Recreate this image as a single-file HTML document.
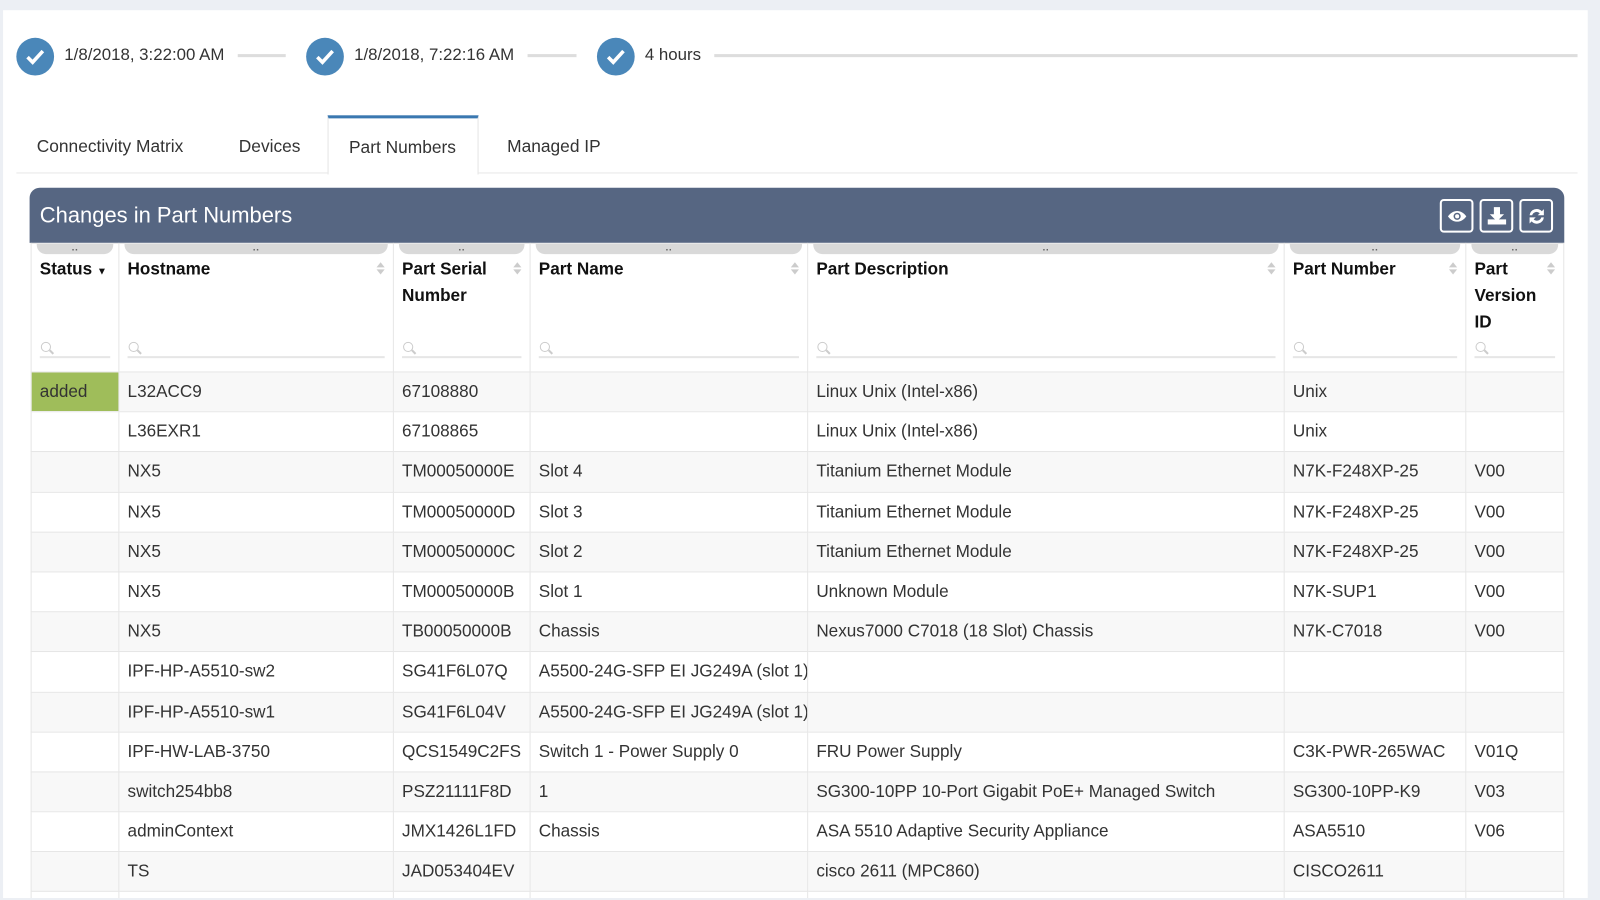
<!DOCTYPE html>
<html><head><meta charset="utf-8"><style>
*{box-sizing:border-box;margin:0;padding:0}
html,body{width:1600px;height:900px;overflow:hidden}
body{background:#eceff4;font-family:"Liberation Sans",sans-serif;color:#222;position:relative}
#w{position:absolute;left:0;top:0;width:1568px;height:880px;overflow:hidden;transform:scale(1.0204);transform-origin:0 0}
.card{position:absolute;left:3px;top:10px;width:1553px;height:900px;background:#fff}
.circ{position:absolute;top:37px;width:37px;height:37px;border-radius:50%;background:#4a87b9}
.circ svg{position:absolute;left:9px;top:10px}
.tl{position:absolute;top:45px;font-size:16.5px;color:#333}
.ln{position:absolute;top:53px;height:3px;background:#ddd}
.tabs{position:absolute;left:16px;top:113px;width:1530px;height:57px;border-bottom:1px solid #e8e8e8}
.tab{position:absolute;top:0;height:57px;font-size:17px;color:#333;padding-top:21px}
.tab.act{border-top:3px solid #3a78b0;border-left:1px solid #e5e5e5;border-right:1px solid #e5e5e5;background:#fff;height:58px;padding-top:19px}
.bar{position:absolute;left:29px;top:184px;width:1504px;height:54px;background:#566682;border-radius:10px 10px 0 0}
.bar h1{position:absolute;left:10px;top:15px;font-size:21.5px;font-weight:normal;color:#fff}
.btn{position:absolute;top:11px;width:33px;height:33px;border:2px solid #fff;border-radius:4px}
.btn svg{position:absolute;left:5px;top:5px}
table{position:absolute;left:30px;top:238px;width:1502px;border-collapse:collapse;table-layout:fixed;font-size:16.8px}
td,th{border:1px solid #e6e6e6;padding:0 8px;text-align:left;vertical-align:middle;white-space:nowrap;overflow:hidden}
th{height:126px;vertical-align:top;padding-top:12px;font-weight:bold;line-height:26px;white-space:normal;position:relative;font-size:16.8px;color:#111}
th .pill{position:absolute;left:5px;right:5px;top:0;height:10px;background:#d9d9d9;border-radius:0 0 9px 9px}
th .pill:after{content:"··";position:absolute;left:50%;top:-6px;font-size:10px;color:#666;transform:translateX(-50%)}
th .srt{position:absolute;right:8px;top:18px;width:8px}
th .srt:before{content:"";position:absolute;left:0;top:0;border:4px solid transparent;border-bottom:5px solid #ccc;border-top:0}
th .srt:after{content:"";position:absolute;left:0;top:7px;border:4px solid transparent;border-top:5px solid #ccc;border-bottom:0}
th .f{position:absolute;left:8px;right:8px;bottom:13px;height:16px;border-bottom:2px solid #e6e6e6}
th .f:before{content:"";position:absolute;left:1px;top:0;width:8px;height:8px;border:1.5px solid #ccc;border-radius:50%}
th .f:after{content:"";position:absolute;left:9px;top:9px;width:5px;height:2px;background:#ccc;transform:rotate(45deg)}
td{height:39.2px;color:#333}
tr:nth-child(even) td{background:#f8f8f8}
td.add{background:#9fbd5a!important;color:#333}
</style></head><body><div id="w">
<div class="card"></div>
<div class="circ" style="left:16px"><svg width="19" height="17" viewBox="0 0 19 17"><path d="M2 9l5 5 10-11" stroke="#fff" stroke-width="3.5" fill="none"/></svg></div>
<div class="tl" style="left:63px">1/8/2018, 3:22:00 AM</div>
<div class="ln" style="left:233px;width:47px"></div>
<div class="circ" style="left:300px"><svg width="19" height="17" viewBox="0 0 19 17"><path d="M2 9l5 5 10-11" stroke="#fff" stroke-width="3.5" fill="none"/></svg></div>
<div class="tl" style="left:347px">1/8/2018, 7:22:16 AM</div>
<div class="ln" style="left:517px;width:48px"></div>
<div class="circ" style="left:585px"><svg width="19" height="17" viewBox="0 0 19 17"><path d="M2 9l5 5 10-11" stroke="#fff" stroke-width="3.5" fill="none"/></svg></div>
<div class="tl" style="left:632px">4 hours</div>
<div class="ln" style="left:700px;width:846px"></div>
<div class="tabs">
<div class="tab" style="left:20px">Connectivity Matrix</div>
<div class="tab" style="left:218px">Devices</div>
<div class="tab act" style="left:305px;width:148px;padding-left:20px">Part Numbers</div>
<div class="tab" style="left:481px">Managed IP</div>
</div>
<div class="bar"><h1>Changes in Part Numbers</h1>
<div class="btn" style="left:1382px"><svg width="20" height="20" viewBox="0 0 20 20"><path d="M1 10c5-7 13-7 18 0c-5 7-13 7-18 0z" fill="#fff"/><circle cx="10" cy="10" r="3.5" fill="#566682"/><circle cx="10" cy="10" r="2" fill="#fff"/></svg></div>
<div class="btn" style="left:1421px"><svg width="20" height="20" viewBox="0 0 20 20"><path d="M7 1h6v7h4l-7 7-7-7h4z" fill="#fff"/><rect x="1" y="13" width="18" height="5" fill="#fff"/></svg></div>
<div class="btn" style="left:1460px"><svg width="20" height="20" viewBox="0 0 20 20"><path d="M3 9a7 7 0 0 1 12-4l2-2v6h-6l2-2a4.5 4.5 0 0 0-7.5 2zM17 11a7 7 0 0 1-12 4l-2 2v-6h6l-2 2a4.5 4.5 0 0 0 7.5-2z" fill="#fff"/></svg></div>
</div>
<table>
<colgroup><col style="width:86px"><col style="width:269px"><col style="width:134px"><col style="width:272px"><col style="width:467px"><col style="width:178px"><col style="width:96px"></colgroup>
<tr>
<th><div class="pill"></div>Status <span style="font-size:10px">&#9660;</span><div class="f"></div></th>
<th><div class="pill"></div>Hostname<span class="srt"></span><div class="f"></div></th>
<th><div class="pill"></div>Part Serial Number<span class="srt"></span><div class="f"></div></th>
<th><div class="pill"></div>Part Name<span class="srt"></span><div class="f"></div></th>
<th><div class="pill"></div>Part Description<span class="srt"></span><div class="f"></div></th>
<th><div class="pill"></div>Part Number<span class="srt"></span><div class="f"></div></th>
<th><div class="pill"></div>Part Version ID<span class="srt"></span><div class="f"></div></th>
</tr>
<tr><td class="add">added</td><td>L32ACC9</td><td>67108880</td><td></td><td>Linux Unix (Intel-x86)</td><td>Unix</td><td></td></tr>
<tr><td></td><td>L36EXR1</td><td>67108865</td><td></td><td>Linux Unix (Intel-x86)</td><td>Unix</td><td></td></tr>
<tr><td></td><td>NX5</td><td>TM00050000E</td><td>Slot 4</td><td>Titanium Ethernet Module</td><td>N7K-F248XP-25</td><td>V00</td></tr>
<tr><td></td><td>NX5</td><td>TM00050000D</td><td>Slot 3</td><td>Titanium Ethernet Module</td><td>N7K-F248XP-25</td><td>V00</td></tr>
<tr><td></td><td>NX5</td><td>TM00050000C</td><td>Slot 2</td><td>Titanium Ethernet Module</td><td>N7K-F248XP-25</td><td>V00</td></tr>
<tr><td></td><td>NX5</td><td>TM00050000B</td><td>Slot 1</td><td>Unknown Module</td><td>N7K-SUP1</td><td>V00</td></tr>
<tr><td></td><td>NX5</td><td>TB00050000B</td><td>Chassis</td><td>Nexus7000 C7018 (18 Slot) Chassis</td><td>N7K-C7018</td><td>V00</td></tr>
<tr><td></td><td>IPF-HP-A5510-sw2</td><td>SG41F6L07Q</td><td>A5500-24G-SFP EI JG249A (slot 1)</td><td></td><td></td><td></td></tr>
<tr><td></td><td>IPF-HP-A5510-sw1</td><td>SG41F6L04V</td><td>A5500-24G-SFP EI JG249A (slot 1)</td><td></td><td></td><td></td></tr>
<tr><td></td><td>IPF-HW-LAB-3750</td><td>QCS1549C2FS</td><td>Switch 1 - Power Supply 0</td><td>FRU Power Supply</td><td>C3K-PWR-265WAC</td><td>V01Q</td></tr>
<tr><td></td><td>switch254bb8</td><td>PSZ21111F8D</td><td>1</td><td>SG300-10PP 10-Port Gigabit PoE+ Managed Switch</td><td>SG300-10PP-K9</td><td>V03</td></tr>
<tr><td></td><td>adminContext</td><td>JMX1426L1FD</td><td>Chassis</td><td>ASA 5510 Adaptive Security Appliance</td><td>ASA5510</td><td>V06</td></tr>
<tr><td></td><td>TS</td><td>JAD053404EV</td><td></td><td>cisco 2611 (MPC860)</td><td>CISCO2611</td><td></td></tr>
<tr><td></td><td></td><td></td><td></td><td></td><td></td><td></td></tr>
</table>
</div></body></html>
